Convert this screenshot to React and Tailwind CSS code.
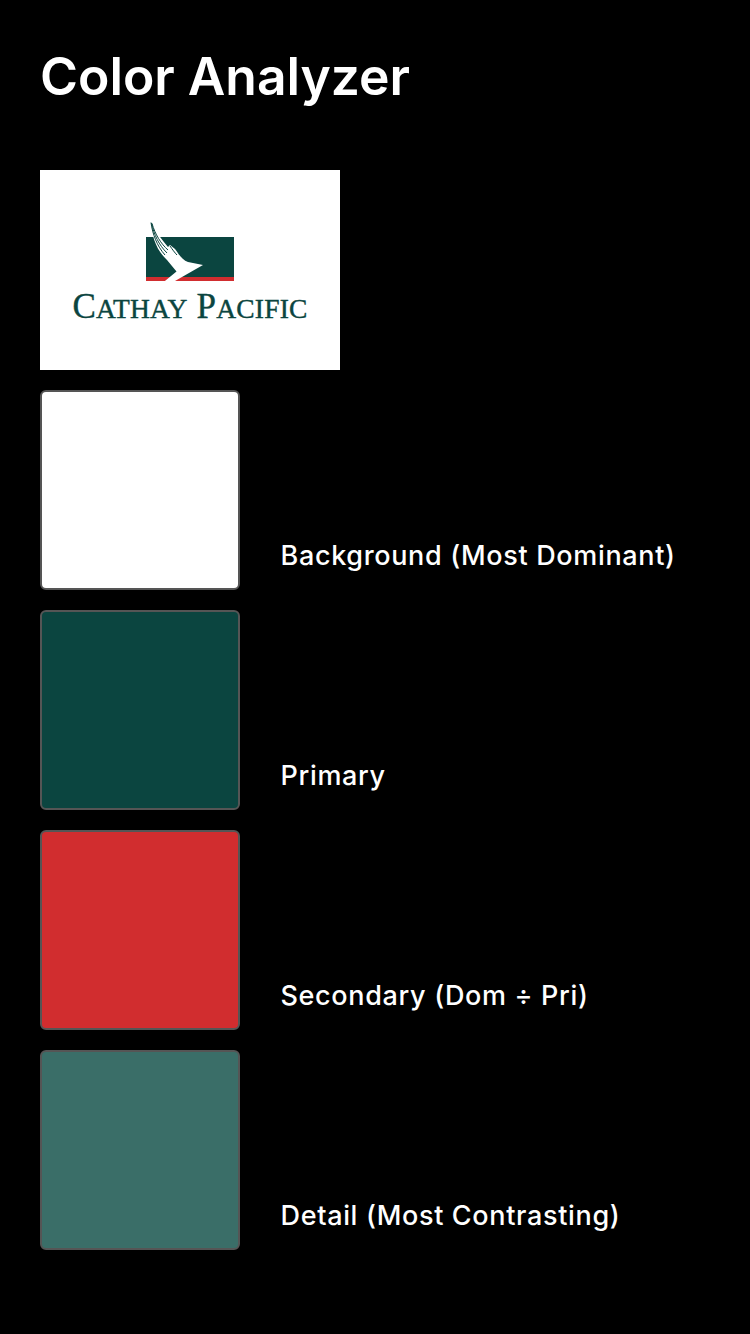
const rows = [
  { label: "Background (Most Dominant)", color: "bg-[#ffffff]" },
  { label: "Primary", color: "bg-[#0b4540]" },
  { label: "Secondary (Dom ÷ Pri)", color: "bg-[#d12d2f]" },
  { label: "Detail (Most Contrasting)", color: "bg-[#3a6e68]" },
];

function Row({ label, color }) {
  return (
    <div className="flex items-end gap-[41px]">
      <div className={`w-[200px] h-[200px] rounded-[6px] border-2 border-[#555555] ${color}`} />
      <div className="text-[27px] leading-[32px] font-medium tracking-[0.66px] text-white pb-[18px] ml-[-0.5px]">{label}</div>
    </div>
  );
}

function Logo() {
  return (
    <div className="w-[300px] h-[200px] bg-white flex flex-col items-center pt-[52px]">
      <svg width="92" height="60" viewBox="0 0 92 60" className="block">
        <rect x="2" y="15" width="88" height="44" fill="#0b4540" />
        <rect x="2" y="55" width="88" height="4" fill="#d12d2f" />
        <path d="M7 1 C8 14 12 28 23 38 L32.5 49.5 L20 59.7 L31 59 L59 43 L44 40 C38 38 34 31 31 27 L26 23 L24 25 C18 18 12 10 7 1 Z" fill="#ffffff" />
        <path d="M7 0.5 C8.5 12 13 24 21 33 M7.5 1 C10 13 15 23 23 31 M8 1.5 C11 12 17 22 24 28 M26 24 C28 27 31 31 33 33" stroke="#0b4540" strokeWidth="1" fill="none" />
      </svg>
      <div className="mt-[10px] font-['Liberation_Serif',serif] text-[#0b4540] [-webkit-text-stroke:0.4px_#0b4540] leading-[30px] whitespace-nowrap text-[35px] tracking-[0.2px]">
        C<span className="text-[27.5px]">ATHAY</span> P<span className="text-[27.5px]">ACIFIC</span>
      </div>
    </div>
  );
}

export default function App() {
  return (
    <div className="w-[750px] h-[1334px] bg-black px-10 font-['Inter',sans-serif] overflow-hidden">
      <h1 className="pt-[45px] h-[170px] text-[51.6px] leading-[62px] font-semibold text-white">Color Analyzer</h1>
      <div className="flex flex-col gap-5">
        <Logo />
        {rows.map((r) => (
          <Row key={r.label} {...r} />
        ))}
      </div>
    </div>
  );
}
